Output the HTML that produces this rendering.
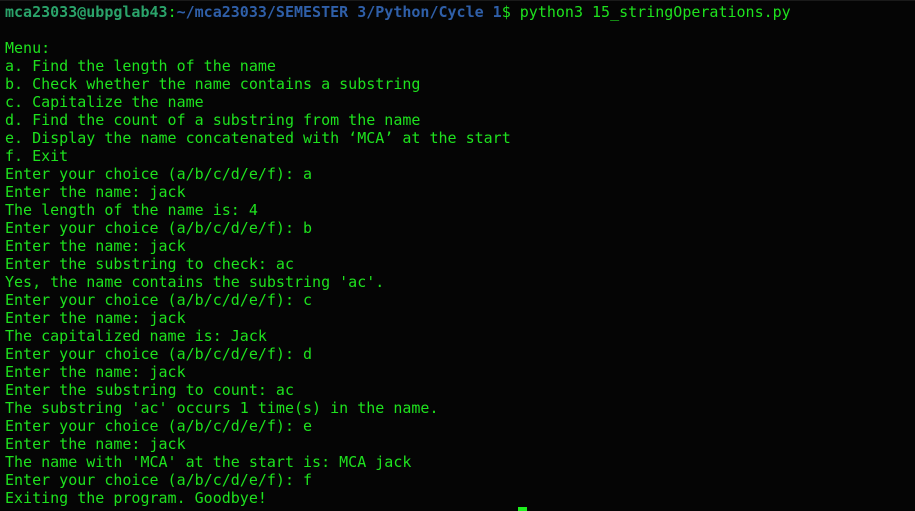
<!DOCTYPE html>
<html><head><meta charset="utf-8"><style>
html,body{margin:0;padding:0;background:#050505;}
body{width:915px;height:510px;overflow:hidden;position:relative;border-top:1px solid #1a1a1a;box-sizing:border-box;}
pre{margin:0;position:absolute;left:5px;top:2px;font-family:"DejaVu Sans Mono","Liberation Mono",monospace;font-size:15px;line-height:18px;color:#1ee21e;letter-spacing:0;}
.u{color:#2aa36a;font-weight:bold}
.p{color:#2f5fa8;font-weight:bold}
.cur{position:absolute;left:518px;top:506px;width:9px;height:4px;background:#1ef01e;}
</style></head><body>
<pre><span class="u">mca23033@ubpglab43</span>:<span class="p">~/mca23033/SEMESTER 3/Python/Cycle 1</span>$ python3 15_stringOperations.py

Menu:
a. Find the length of the name
b. Check whether the name contains a substring
c. Capitalize the name
d. Find the count of a substring from the name
e. Display the name concatenated with ‘MCA’ at the start
f. Exit
Enter your choice (a/b/c/d/e/f): a
Enter the name: jack
The length of the name is: 4
Enter your choice (a/b/c/d/e/f): b
Enter the name: jack
Enter the substring to check: ac
Yes, the name contains the substring 'ac'.
Enter your choice (a/b/c/d/e/f): c
Enter the name: jack
The capitalized name is: Jack
Enter your choice (a/b/c/d/e/f): d
Enter the name: jack
Enter the substring to count: ac
The substring 'ac' occurs 1 time(s) in the name.
Enter your choice (a/b/c/d/e/f): e
Enter the name: jack
The name with 'MCA' at the start is: MCA jack
Enter your choice (a/b/c/d/e/f): f
Exiting the program. Goodbye!</pre>
<div class="cur"></div>
</body></html>
